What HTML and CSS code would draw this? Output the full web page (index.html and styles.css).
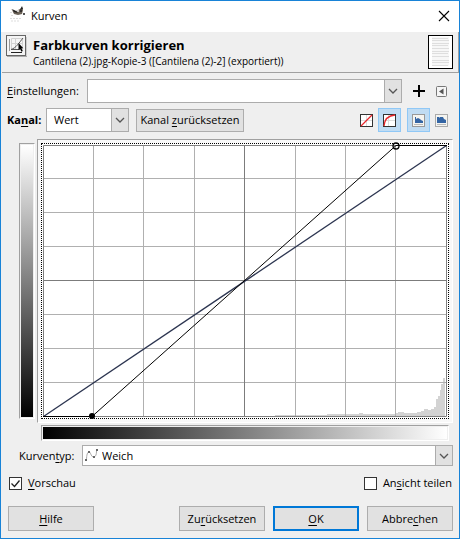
FILE: index.html
```html
<!DOCTYPE html>
<html lang="de">
<head>
<meta charset="utf-8">
<title>Kurven</title>
<link rel="stylesheet" href="styles.css">
</head>
<body>
<main class="window">
  <header class="titlebar">
    <svg class="app-icon" width="16" height="16" viewBox="0 0 16 16" aria-hidden="true">
      <path d="M1 3.500h3M0 6.500h5M1 9.500h3M0 12.500h11M1 15h8" stroke="#ddd" stroke-dasharray="2 1"/>
      <path d="M2 4l4 1 4-2 2-2 1 3-1 4-4 1-4-1z" fill="#6b6257"/>
      <path d="M2 3l4 2 2 2-4-1zM12 0l1 3-3 1z" fill="#222"/>
      <circle cx="8" cy="5" r="1" fill="#eee"/><circle cx="11" cy="5" r="1" fill="#222"/>
      <path d="M13 7h2v2h-2z" fill="#555"/>
    </svg>
    <span class="caption">Kurven</span>
    <button class="close" aria-label="Schließen"><svg width="12" height="12" viewBox="0 0 12 12"><path d="M1 1l10 10M11 1L1 11" stroke="#000" stroke-width="1.1"/></svg></button>
  </header>

  <section class="banner">
    <svg class="tool-icon" width="21" height="22" viewBox="0 0 21 22" aria-hidden="true">
      <rect x=".5" y=".5" width="19" height="20" fill="#f5f5f5" stroke="#666"/>
      <path d="M1 21.500h20V2" fill="none" stroke="#aaa"/>
      <path d="M3.500 4v12" stroke="#999"/>
      <path d="M5 17.500h11" stroke="#222"/>
      <path d="M5.500 3.500h11v11h-11zM9.500 3v11M5 8.500h11" fill="none" stroke="#d2d2d2"/>
      <path d="M5 14.500C10 13 13 8 17 3M5 14.500h9" fill="none" stroke="#555"/>
      <path d="M12.500 8v7l1.500-1.300 1.500 3 1.300-.7-1.300-2.800h1.800z" fill="#000"/>
    </svg>
    <div class="banner-text">
      <h1>Farbkurven korrigieren</h1>
      <p>Cantilena (2).jpg-Kopie-3 ([Cantilena (2)-2] (exportiert))</p>
    </div>
    <svg class="thumb" width="25" height="34" viewBox="0 0 25 34" aria-hidden="true">
      <rect x=".5" y=".5" width="24" height="33" fill="#fff" stroke="#000"/>
      <path d="M4 2h17v29H4z" fill="#f7f7f7"/>
      <path d="M4 3.500h16M4 5.500h17M4 8.500h17M4 10.500h16M4 13.500h17M4 16.500h17M4 18.500h16M4 21.500h17M4 25.500h17M4 27.500h17M4 30.500h16" stroke="#dedede"/>
    </svg>
  </section>

  <form class="content">
    <div class="row settings">
      <label for="preset"><u>E</u>instellungen:</label>
      <span class="combo grow"><select id="preset"><option></option></select><span class="arrow"><svg width="10" height="6" viewBox="0 0 10 6"><path d="M1 1l4 4 4-4"/></svg></span></span>
      <button type="button" class="plain add" aria-label="Hinzufügen"><svg width="12" height="12" viewBox="0 0 12 12"><path d="M6 0v12M0 6h12" stroke="#000" stroke-width="2"/></svg></button>
      <button type="button" class="plain" aria-label="Menü"><svg width="11" height="11" viewBox="0 0 11 11"><rect x=".5" y=".5" width="10" height="10" rx="1" fill="#f5f5f5" stroke="#777"/><path d="M7.500 2.500v6L3 5.500z" fill="#555"/></svg></button>
    </div>

    <div class="row channel">
      <label for="channel"><b>Ka<u>n</u>al:</b></label>
      <span class="combo value"><select id="channel"><option>Wert</option></select><span class="arrow"><svg width="10" height="6" viewBox="0 0 10 6"><path d="M1 1l4 4 4-4"/></svg></span></span>
      <button type="button" class="btn reset">Kanal <u>z</u>urücksetzen</button>
      <span class="toggles">
        <button type="button" class="toggle" aria-label="Linear"><svg width="13" height="13" viewBox="0 0 13 13"><rect x=".5" y=".5" width="12" height="12" fill="#fff" stroke="#333"/><path d="M6.500 1v11M1 6.500h11" stroke="#ddd"/><path d="M1 12L12 1" stroke="#e8262b" stroke-width="1.200"/></svg></button>
        <button type="button" class="toggle on" aria-label="Logarithmisch"><svg width="13" height="13" viewBox="0 0 13 13"><rect x=".5" y=".5" width="12" height="12" fill="#fff" stroke="#333"/><path d="M5.500 1v11M1 6.500h11" stroke="#ddd"/><path d="M1 12C1.500 6 5 1.500 12 1" fill="none" stroke="#e8262b" stroke-width="1.300"/></svg></button>
        <button type="button" class="toggle on second" aria-label="Lineares Histogramm"><svg width="13" height="13" viewBox="0 0 13 13"><rect x=".5" y=".5" width="12" height="12" fill="#f4f4f0" stroke="#999"/><path d="M3 9V3h1v2l2-1 2 1 1 1 2 1v2z" fill="#3465a4"/><path d="M2 10.500h9" stroke="#bbb"/></svg></button>
        <button type="button" class="toggle" aria-label="Logarithmisches Histogramm"><svg width="13" height="13" viewBox="0 0 13 13"><rect x=".5" y=".5" width="12" height="12" fill="#f4f4f0" stroke="#aaa"/><path d="M2 9V3h2v1l1-1 3 0 1 2 2 1v3z" fill="#3465a4"/><path d="M2 10.500h9" stroke="#bbb"/></svg></button>
      </span>
    </div>

    <div class="curves">
      <div class="ramp vertical"></div>
      <div class="frame">
        <div class="focus">
          <svg class="graph" viewBox="0 0 404 272" preserveAspectRatio="none" role="img" aria-label="Kurve">
            <path fill="#d3d3d3" d="M232 272v-2h52v-1h32v-1h4v1h32v-1h3v-1h6v1h13v-1h4v-1h3v-2h4v1h3v-1h3v-2h2v-8h2v-3h2v-6h1v-6h2v-6h2v38z"/>
            <path class="grid" d="M50.500 0v272M100.500 0v272M151.500 0v272M252.500 0v272M302.500 0v272M352.500 0v272M0 33.500h404M0 67.500h404M0 101.500h404M0 169.500h404M0 203.500h404M0 237.500h404"/>
            <path class="axis" d="M201.500 0v272M0 135.500h404"/>
            <path class="outline" d="M.5 .5h403v271H.5z"/>
            <path class="identity" d="M.5 271.500L403.500 .5"/>
            <path class="curve" d="M0 271.500H49L201 136 353 .5H404"/>
            <circle cx="49" cy="271" r="3"/>
            <circle cx="353" cy="1" r="3" fill="none" stroke="#000" stroke-width="1.300"/>
          </svg>
        </div>
      </div>
      <div class="ramp horizontal"></div>
    </div>

    <div class="row type">
      <label for="type">Kurven<u>t</u>yp:</label>
      <span class="combo grow short">
        <svg class="type-icon" width="13" height="13" viewBox="0 0 13 13" aria-hidden="true"><path d="M1.500 11C1.500 5 3 2 4.500 3S6 8 8.500 8s3-3 3-6" fill="none" stroke="#aaa"/><path d="M0 10h2v2H0zM3 2h2v2H3zM8 7h2v2H8zM11 0h2v2h-2z" fill="#666"/></svg>
        <select id="type" class="with-icon"><option>Weich</option></select><span class="arrow"><svg width="10" height="6" viewBox="0 0 10 6"><path d="M1 1l4 4 4-4"/></svg></span></span>
    </div>

    <div class="row checks">
      <label class="check"><input type="checkbox" checked><svg class="tick" width="13" height="13" viewBox="0 0 13 13" aria-hidden="true"><path d="M2.500 6.500l3 3 5-6"/></svg><span><u>V</u>orschau</span></label>
      <label class="check"><input type="checkbox"><span>An<u>s</u>icht teilen</span></label>
    </div>

    <div class="row actions">
      <button type="button" class="btn help"><u>H</u>ilfe</button>
      <button type="button" class="btn">Zu<u>r</u>ücksetzen</button>
      <button type="button" class="btn default"><u>O</u>K</button>
      <button type="button" class="btn">Abbre<u>c</u>hen</button>
    </div>
  </form>
</main>
</body>
</html>
```

FILE: styles.css
```css
* { box-sizing: border-box; }

body {
  margin: 0;
  background: #efefef;
  color: #000;
  font: 11px/16px "Open Sans", "Noto Sans", sans-serif;
}

button, select, input { font: inherit; color: inherit; margin: 0; }
svg { display: block; }
u { text-underline-offset: 2px; }

.window {
  display: flex;
  flex-direction: column;
  min-height: 100vh;
  border: 1px solid #1883d7;
}

.titlebar {
  display: flex;
  align-items: center;
  height: 31px;
  padding: 0 9px 2px 9px;
  background: #fff;
}
.app-icon { margin-bottom: 4px; }
.caption { flex: 1; margin-left: 5px; }
.close, .plain { padding: 0; border: 0; background: none; }

.banner {
  display: flex;
  align-items: flex-start;
  margin-left: 1px;
  padding: 3px 5px 3px 4px;
  border-right: 1px solid #a0a0a0;
  border-bottom: 1px solid #a0a0a0;
}
.banner-text { flex: 1; margin-left: 6px; }
h1 { margin: 1px 0 0; font-size: 13px; line-height: 18px; }
p { margin: 0; font-size: 10px; line-height: 14px; }

.content {
  flex: 1;
  display: flex;
  flex-direction: column;
  padding: 6px 6px 7px 6px;
}
.row { display: flex; align-items: center; }

.combo { position: relative; display: flex; height: 24px; }
.grow { flex: 1; }
.short { height: 21px; }
.combo select {
  appearance: none;
  width: 100%;
  height: 100%;
  padding: 0 24px 0 7px;
  border: 1px solid #acacac;
  border-radius: 0;
  background: #fff;
}
.combo .with-icon { padding-left: 19px; }
.type-icon { position: absolute; left: 3px; top: 4px; }
.arrow {
  position: absolute;
  top: 0;
  right: 0;
  bottom: 0;
  width: 18px;
  display: grid;
  place-items: center;
  border: 1px solid #acacac;
  background: #e1e1e1;
  pointer-events: none;
}
.arrow path { fill: none; stroke: #555; stroke-width: 1.3; }

.settings label { width: 80px; }
.settings .add { margin: 0 11px; }
.settings { padding-right: 6px; }

.channel { margin-top: 5px; }
.channel label { width: 39px; }
.value { width: 83px; }
.toggles { display: flex; margin-left: auto; }
.toggle {
  display: grid;
  place-items: center;
  width: 23px;
  height: 24px;
  padding: 0;
  border: 1px solid transparent;
  background: none;
}
.toggle.on { border-color: #90c8f6; background: #c0dcf3; }
.second { margin-left: 6px; }

.btn {
  width: 86px;
  height: 25px;
  padding: 0;
  border: 1px solid #adadad;
  background: #e1e1e1;
  white-space: nowrap;
}
.btn.reset { width: 108px; height: 23px; margin-left: 7px; }
.btn.default { border: 2px solid #0078d7; }

.curves {
  flex: 1;
  display: grid;
  grid-template-columns: 16px 1fr;
  grid-template-rows: 1fr 16px;
  gap: 2px;
  margin: 7px 0 0 12px;
}
.frame {
  padding: 3px;
  border: 1px solid;
  border-color: #a0a0a0 #fff #fff #a0a0a0;
  background: #f8f8f8;
}
.focus {
  display: flex;
  height: 100%;
  padding: 1px;
  border: 1px dotted #000;
  background: #fff;
}
.graph { flex: 1; width: 0; min-height: 240px; overflow: visible; }
.graph path { vector-effect: non-scaling-stroke; }
.grid { fill: none; stroke: #b0b0b0; }
.axis { fill: none; stroke: #7c7c7c; }
.outline { fill: none; stroke: #808080; }
.identity { fill: none; stroke: #2c3550; stroke-width: 1.3; }
.curve { fill: none; stroke: #000; stroke-width: 1; }

.ramp {
  border: 1px solid;
  border-color: #a0a0a0 #fff #fff #a0a0a0;
  padding: 1px;
  background-clip: content-box;
  background-origin: content-box;
}
.vertical { margin: 4px 0; background-image: linear-gradient(#fff, #000); }
.horizontal { grid-column: 2; margin: 0 4px; background-image: linear-gradient(90deg, #000, #fff); }

.type { margin-top: 4px; }
.type label { width: 75px; padding-left: 12px; white-space: nowrap; }

.checks { justify-content: space-between; margin-top: 9px; padding: 0 1px 0 2px; }
.check { position: relative; display: flex; align-items: center; gap: 6px; }
.check input {
  appearance: none;
  width: 13px;
  height: 13px;
  border: 1px solid #333;
  background: #fff;
}
.tick { position: absolute; left: 0; top: 2px; fill: none; stroke: #222; stroke-width: 1.3; visibility: hidden; }
input:checked + .tick { visibility: visible; }

.actions { gap: 8px; margin-top: 15px; padding-left: 1px; }
.help { margin-right: auto; }
```
